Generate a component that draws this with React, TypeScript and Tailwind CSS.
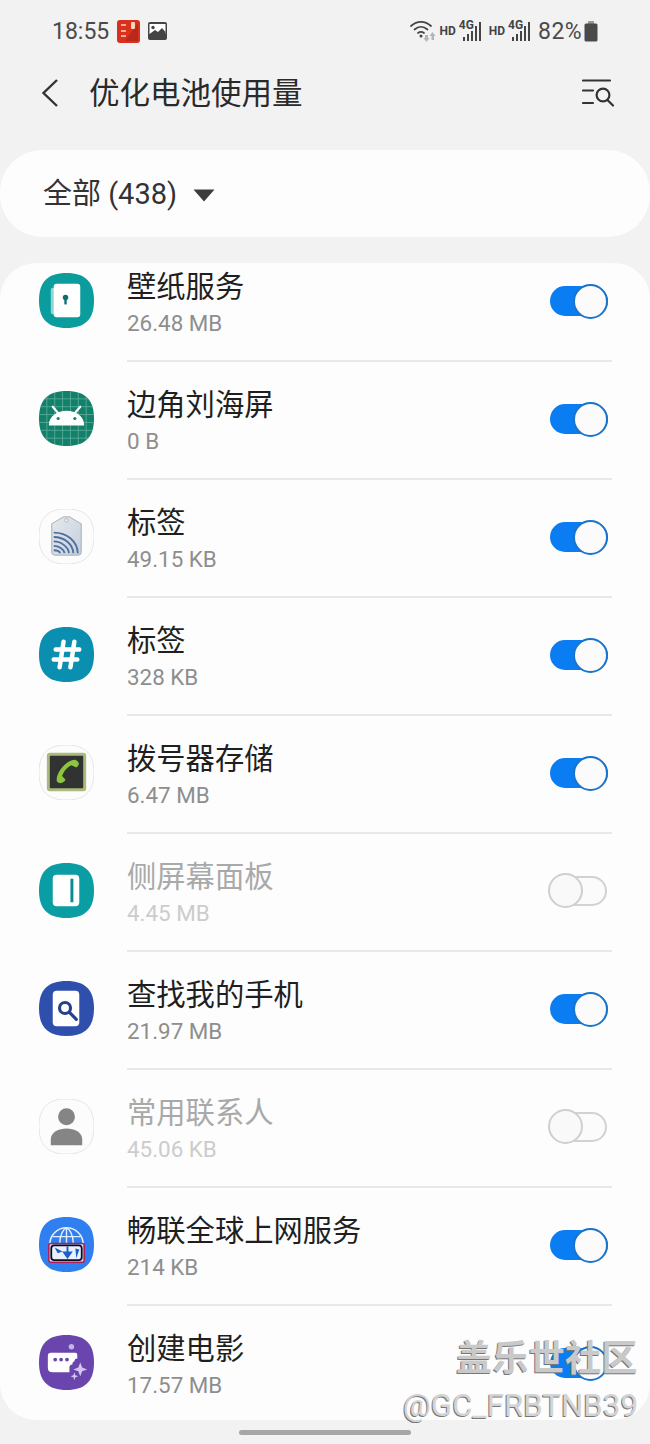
import React from "react";

const CJK = { fontFamily: '"Roboto","Noto Sans CJK SC",sans-serif' };
const SQ = "M28 0C47 0 56 9 56 28C56 47 47 56 28 56C9 56 0 47 0 28C0 9 9 0 28 0Z";

function Icon({ bg, stroke, children }: { bg: string; stroke?: string; children?: React.ReactNode }) {
  return (
    <svg width="55" height="55" viewBox="0 0 56 56" className="mb-[1px] shrink-0">
      <path d={SQ} fill={bg} stroke={stroke} strokeWidth={stroke ? 1 : 0} />
      {children}
    </svg>
  );
}

const Wallpaper = () => (
  <Icon bg="#0b9c9e">
    <rect x="12" y="15" width="8" height="27" rx="2" fill="#8fd6d4" />
    <rect x="15" y="11" width="27" height="34" rx="3" fill="#fff" />
    <circle cx="27" cy="25" r="2.8" fill="#0b6f73" />
    <rect x="25.800" y="25" width="2.400" height="7" fill="#0b6f73" />
  </Icon>
);

const Android = () => {
  const lines = [];
  for (let i = 1; i < 7; i++) {
    lines.push(<line key={"v" + i} x1={i * 8} y1="0" x2={i * 8} y2="56" stroke="#62b09b" strokeWidth="0.8" />);
    lines.push(<line key={"h" + i} x1="0" y1={i * 8} x2="56" y2={i * 8} stroke="#62b09b" strokeWidth="0.8" />);
  }
  return (
    <Icon bg="#12806a">
      <clipPath id="android-clip">
        <path d={SQ} />
      </clipPath>
      <g clipPath="url(#android-clip)">{lines}</g>
      <path d="M10 35C10 25 19 20 28 20C37 20 46 25 46 35Z" fill="#fff" />
      <path d="M14 16L20 23M42 16L36 23" stroke="#fff" strokeWidth="2.200" strokeLinecap="round" />
      <circle cx="19.500" cy="28" r="1.600" fill="#12806a" />
      <circle cx="36.500" cy="28" r="1.600" fill="#12806a" />
    </Icon>
  );
};

const Nfc = () => (
  <Icon bg="#fcfcfc" stroke="#e4e4e4">
    <defs>
      <linearGradient id="tag-grad" x1="0" y1="0" x2="1" y2="1">
        <stop offset="0" stopColor="#e6e9ec" />
        <stop offset="1" stopColor="#c3cfdd" />
      </linearGradient>
    </defs>
    <path d="M13 15L25 8H31L43 15V44Q43 47 40 47H16Q13 47 13 44Z" fill="url(#tag-grad)" stroke="#a9aeb4" strokeWidth="1" />
    <circle cx="28" cy="11.500" r="1.700" fill="#f5f5f5" stroke="#9ea3a8" strokeWidth="0.7" />
    <g fill="none" stroke="#4d6f9c" strokeWidth="1.800">
      <path d="M15 24C29 24 39 33 39.500 45" />
      <path d="M15 28.500C26 28.500 34.500 36 35 45" />
      <path d="M15 33C23 33 30 39 30.500 45" />
      <path d="M15 37.500C20 37.500 25.500 41 26 45" />
      <path d="M15 42C18 42 21 43 21.500 45" />
    </g>
  </Icon>
);

const Hash = () => (
  <Icon bg="#0a8fb0">
    <path d="M25 15L21 41M36 15L32 41M17 23H41M15 33H39" stroke="#fff" strokeWidth="4.600" strokeLinecap="round" />
  </Icon>
);

const Dialer = () => (
  <Icon bg="#fcfcfc" stroke="#e4e4e4">
    <rect x="8" y="8" width="40" height="39" rx="3" fill="#a9ba7b" />
    <rect x="11" y="11" width="34" height="33" rx="1" fill="#303331" />
    <path d="M37 15C41 17 42 20 38 23L33 20.500C29 22 25 27 23.500 31.500L27 35.500C25 39 21 40 18.500 37.500C15.500 32 26 15 37 15Z" fill="#8cc63f" />
  </Icon>
);

const Edge = () => (
  <Icon bg="#0a9da3">
    <rect x="14" y="12" width="27" height="32" rx="4" fill="#fff" />
    <rect x="32" y="16" width="3" height="24" fill="#0a8d93" />
  </Icon>
);

const FindMobile = () => (
  <Icon bg="#2f4fac">
    <rect x="14" y="10" width="27" height="36" rx="4" fill="#fff" />
    <circle cx="26.500" cy="27.500" r="5.600" fill="none" stroke="#24408f" strokeWidth="3.200" />
    <path d="M31 32L38 39" stroke="#24408f" strokeWidth="3.200" strokeLinecap="round" />
  </Icon>
);

const Contact = () => (
  <Icon bg="#fcfcfc" stroke="#e4e4e4">
    <circle cx="28" cy="18" r="8.600" fill="#858585" />
    <path d="M12 47V41C12 34 20 30 28 30C36 30 44 34 44 41V47Z" fill="#858585" />
  </Icon>
);

const Roaming = () => (
  <Icon bg="#2f7ff0">
    <path d="M11 28C11 18 19 11 28 11C37 11 45 18 45 28Z" fill="#2f7ff0" stroke="#e4eefc" strokeWidth="1.600" />
    <path d="M21 28C21 18 25 12 28 11C31 12 35 18 35 28M28 11V28M14 20H42" fill="none" stroke="#e4eefc" strokeWidth="1.400" />
    <rect x="10" y="27" width="36" height="19" rx="2" fill="#cfe1fb" stroke="#b11d55" strokeWidth="1.600" />
    <rect x="12.500" y="29" width="31" height="15" rx="3" fill="#eaf2fe" stroke="#0b0b20" strokeWidth="1.800" />
    <path d="M16 31L24 35L19 37ZM37 32L41 33L38 42Z" fill="#1d5fcb" />
    <path d="M29 30V37M25.500 36H32.500L29 41Z" stroke="#1d5fcb" strokeWidth="2" fill="#1d5fcb" />
  </Icon>
);

const Movie = () => (
  <Icon bg="#6a45ad">
    <circle cx="33" cy="12" r="2.800" fill="#c5b2e6" />
    <path d="M12 18H37Q39 18 39 20V24Q36 24 36 27Q34 27 34 30Q31 30 31 33V38H14Q9 38 9 33V21Q9 18 12 18Z" fill="#fff" />
    <circle cx="16.500" cy="25" r="1.900" fill="#6a45ad" />
    <circle cx="22.500" cy="25" r="1.900" fill="#6a45ad" />
    <circle cx="28.500" cy="25" r="1.900" fill="#6a45ad" />
    <path d="M42 28L44 33L49 35L44 37L42 42L40 37L35 35L40 33Z" fill="#d4c6ee" />
    <path d="M36 38L37 41L40 42L37 43L36 46L35 43L32 42L35 41Z" fill="#d4c6ee" />
  </Icon>
);

function Toggle({ on }: { on: boolean }) {
  return on ? (
    <div className="relative h-[30px] w-[58px] rounded-full bg-[#0a7df2]">
      <div className="absolute -top-[2px] right-0 h-[35px] w-[35px] rounded-full border-2 border-[#1a74cc] bg-[#fbfbfb]" />
    </div>
  ) : (
    <div className="relative -left-[1px] h-[30px] w-[58px] rounded-full border-2 border-[#d2d2d2] bg-[#fbfbfb]">
      <div className="absolute -top-[5px] -left-[3px] h-[35px] w-[35px] rounded-full border-2 border-[#cfcfcf] bg-[#f9f9f9]" />
    </div>
  );
}

const rows: { icon: React.ReactNode; name: string; size: string; on: boolean }[] = [
  { icon: <Wallpaper />, name: "壁纸服务", size: "26.48 MB", on: true },
  { icon: <Android />, name: "边角刘海屏", size: "0 B", on: true },
  { icon: <Nfc />, name: "标签", size: "49.15 KB", on: true },
  { icon: <Hash />, name: "标签", size: "328 KB", on: true },
  { icon: <Dialer />, name: "拨号器存储", size: "6.47 MB", on: true },
  { icon: <Edge />, name: "侧屏幕面板", size: "4.45 MB", on: false },
  { icon: <FindMobile />, name: "查找我的手机", size: "21.97 MB", on: true },
  { icon: <Contact />, name: "常用联系人", size: "45.06 KB", on: false },
  { icon: <Roaming />, name: "畅联全球上网服务", size: "214 KB", on: true },
  { icon: <Movie />, name: "创建电影", size: "17.57 MB", on: true },
];

function Row({ icon, name, size, on }: { icon: React.ReactNode; name: string; size: string; on: boolean }) {
  return (
    <div>
      <div className="flex h-[116px] items-center pb-[2px] pl-[39px] pr-[42px]">
        {icon}
        <div className="ml-[33px] flex-1 pt-[8px]">
          <div className={`text-[29.300px] leading-[36px] ${on ? "text-[#1f1f1f]" : "text-[#a9a9a9]"}`}>{name}</div>
          <div className={`text-[22.400px] leading-[36px] ${on ? "text-[#8e8e8e]" : "text-[#cccccc]"}`}>{size}</div>
        </div>
        <Toggle on={on} />
      </div>
      <div className="ml-[127px] mr-[38px] h-[2px] bg-[#e8e8e8]" />
    </div>
  );
}

function Signal() {
  return (
    <div className="relative h-[20px] w-[24px]">
      <span className="absolute -top-[2px] left-0 text-[12px] font-bold leading-[13px] text-[#444]">4G</span>
      <svg width="24" height="20" viewBox="0 0 24 20" className="absolute left-0 top-0">
        <g fill="#444">
          <rect x="4" y="16" width="2" height="4" />
          <rect x="8" y="13" width="2" height="7" />
          <rect x="12" y="10" width="2" height="10" />
          <rect x="16" y="5" width="2" height="15" />
          <rect x="20" y="1" width="2" height="19" />
        </g>
      </svg>
    </div>
  );
}

export default function App() {
  return (
    <div className="relative h-[1444px] w-[650px] overflow-hidden bg-[#f2f2f2]" style={CJK}>
      {/* status bar */}
      <div className="flex h-[62px] items-center justify-between pl-[52px] pr-[52px]">
        <div className="flex items-center">
          <span className="text-[23px] leading-[28px] pt-[2px] text-[#4a4a4a]">18:55</span>
          <svg width="23" height="23" viewBox="0 0 23 23" className="ml-[8px]">
            <rect width="23" height="23" rx="3" fill="#d8321e" />
            <path d="M21 3L8 21H20Q21 21 21 20Z" fill="#b9281a" />
            <rect x="14" y="2" width="4" height="7" rx="1" fill="#f6d8b8" />
            <path d="M4 5H9M4 11H9M4 16H9" stroke="#f6d8b8" strokeWidth="1.600" />
          </svg>
          <svg width="19" height="18" viewBox="0 0 19 18" className="ml-[8px]">
            <rect width="19" height="18" rx="2" fill="#444" />
            <rect x="1.500" y="2" width="16" height="10" fill="#fff" />
            <circle cx="5" cy="5.500" r="1.700" fill="#444" />
            <path d="M1.500 12L7 8L10 10L14 6L17.500 10V14H1.500Z" fill="#444" />
          </svg>
        </div>
        <div className="flex items-center">
          <svg width="26" height="24" viewBox="0 0 26 24">
            <g fill="none" stroke="#444" strokeWidth="1.700" strokeLinecap="round">
              <path d="M1 7C7 1.500 15 1.500 21 7" />
              <path d="M4.500 10.500C8.500 7 13.500 7 17.500 10.500" />
              <path d="M8 14C10 12.500 12 12.500 14 14" />
            </g>
            <circle cx="11" cy="17" r="1.500" fill="#444" />
            <path d="M15 16H18V19H19.500L16.500 23L13.500 19H15ZM22.500 13L25.500 17H24V21H21.500V17H19.500Z" fill="#b5b5b5" />
          </svg>
          <span className="ml-[4px] text-[12px] font-bold text-[#444]">HD</span>
          <div className="ml-[3px]"><Signal /></div>
          <span className="ml-[6px] text-[12px] font-bold text-[#444]">HD</span>
          <div className="ml-[3px]"><Signal /></div>
          <span className="ml-[6px] pt-[2px] text-[23px] leading-[28px] tracking-[0.4px] text-[#4a4a4a]">82%</span>
          <svg width="14" height="21" viewBox="0 0 14 21" className="ml-[2px]">
            <rect x="4" y="0" width="6" height="3" fill="#999" />
            <rect x="0.500" y="2.500" width="13" height="18" rx="1.500" fill="#4a4a4a" />
          </svg>
        </div>
      </div>

      {/* title bar */}
      <div className="flex h-[62px] items-center pl-[41px] pr-[36px]">
        <svg width="18" height="30" viewBox="0 0 18 30">
          <path d="M16 2L2.500 15L16 28" fill="none" stroke="#333" strokeWidth="2.400" />
        </svg>
        <h1 className="ml-[30px] flex-1 pt-[2px] text-[30.500px] font-normal text-[#2a2a2a]">优化电池使用量</h1>
        <svg width="32" height="28" viewBox="0 0 32 28">
          <g fill="none" stroke="#333" strokeWidth="2.200" strokeLinecap="round">
            <path d="M1 1.500H28M1 11.500H11M1 24H11" />
            <circle cx="21" cy="16" r="6.400" />
            <path d="M25.500 21L31 26.500" />
          </g>
        </svg>
      </div>

      {/* filter */}
      <div className="mt-[26px] flex h-[87px] items-center rounded-[42px] bg-[#fdfdfd] pl-[43px]">
        <span className="pt-[3px] text-[29px] text-[#333]">全部 (438)</span>
        <svg width="22" height="13" viewBox="0 0 22 13" className="ml-[16px] mt-[3px]">
          <path d="M0.500 0.500H21.500L11 12.500Z" fill="#3c3c3c" />
        </svg>
      </div>

      {/* list */}
      <div className="mt-[26px] h-[1157px] overflow-hidden rounded-[36px] bg-[#fdfdfd]">
        <div className="-mt-[19px]">
          {rows.map((r, i) => (
            <Row key={i} {...r} />
          ))}
        </div>
      </div>

      {/* home indicator */}
      <div className="mx-auto mt-[10px] h-[5px] w-[172px] rounded-full bg-[#a6a6a6]" />

      {/* watermark */}
      <div className="absolute right-[12px] top-[1337px] flex flex-col items-end">
        <span className="text-[36px] font-bold leading-[44px] tracking-[0.4px] text-[#c9c9c9] [text-shadow:-1px_1px_0_#777]">盖乐世社区</span>
        <span className="mt-[6px] text-[31.300px] leading-[38px] text-[#d4d4d4] [text-shadow:-1px_1px_0_#777]">@GC_FRBTNB39</span>
      </div>
    </div>
  );
}
